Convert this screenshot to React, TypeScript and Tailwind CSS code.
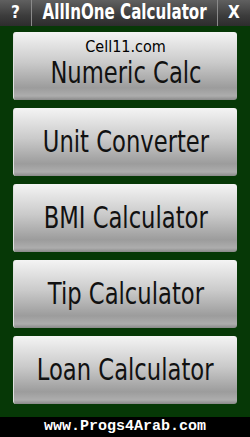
import React from "react";

const items = ["Numeric Calc", "Unit Converter", "BMI Calculator", "Tip Calculator", "Loan Calculator"];

export default function App() {
  return (
    <div className="w-[250px] h-[437px] flex flex-col bg-black overflow-hidden">
      <div className="h-[26px] shrink-0 flex bg-[linear-gradient(#606060,#3c3c3c_60%,#2c2c2c)]">
        <div className="w-[32px] shrink-0 flex items-center justify-center text-white font-bold text-[17px] border-r border-[#8a8a8a] [font-family:'DejaVu_Sans_Condensed',sans-serif]">?</div>
        <div className="flex-1 min-w-0 overflow-visible flex items-center justify-center text-white text-[21px] font-bold [font-family:'DejaVu_Sans_Condensed',sans-serif]">
          <span className="inline-block scale-x-[0.8] whitespace-nowrap">AllInOne Calculator</span>
        </div>
        <div className="w-[33px] shrink-0 flex items-center justify-center text-white font-bold text-[17px] border-l border-[#8a8a8a] [font-family:'DejaVu_Sans_Condensed',sans-serif]">X</div>
      </div>
      <div className="flex-1 bg-[#063806] flex flex-col gap-[8px] pt-[6px] px-[13px]">
        {items.map((t, i) => (
          <div key={t} className="h-[68px] shrink-0 rounded-[3px] bg-[linear-gradient(#f4f4f4,#cacaca_45%,#9c9c9c_82%,#adadad_94%,#8a8a8a)] border-l border-[#e0e0e0] flex flex-col items-center justify-center relative">
            {i === 0 && (
              <div className="absolute top-[3px] left-0 right-0 text-center text-black text-[16px] [font-family:'DejaVu_Sans_Condensed',sans-serif]">Cell11.com</div>
            )}
            <div className={`text-[#111] text-[30px] leading-none [font-family:'DejaVu_Sans_Condensed',sans-serif] ${i === 0 ? "mt-[14px]" : ""}`}>
              <span className="inline-block scale-x-[0.84] whitespace-nowrap">{t}</span>
            </div>
          </div>
        ))}
      </div>
      <div className="h-[20px] shrink-0 bg-black flex items-center justify-center text-white font-bold text-[15px] [font-family:'Liberation_Mono',monospace]">www.Progs4Arab.com</div>
    </div>
  );
}
